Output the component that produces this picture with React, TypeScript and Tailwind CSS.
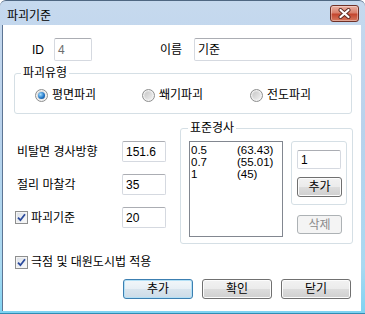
import type { ReactNode } from 'react';

type FieldProps = {
  value: string;
  className?: string;
  muted?: boolean;
};

const Field = ({ value, className = '', muted = false }: FieldProps) => (
  <div
    className={`flex items-center rounded-[2px] border border-[#d5d9e0] border-t-[#abadb3] bg-white pl-[3px] ${
      muted ? 'text-[#6d6d6d]' : 'text-black'
    } ${className}`}
  >
    {value}
  </div>
);

type BtnProps = {
  children: ReactNode;
  variant?: 'normal' | 'default' | 'disabled';
  className?: string;
};

const Btn = ({ children, variant = 'normal', className = '' }: BtnProps) => {
  const look =
    variant === 'default'
      ? 'border-[#3c7fb1] bg-[linear-gradient(#f2f7fa_0%,#e7eff5_50%,#d9e5ee_50%,#cddbe7_100%)] shadow-[inset_0_0_0_1px_#b3e0f6] text-black'
      : variant === 'disabled'
        ? 'border-[#adb2b5] bg-[#f4f4f4] text-[#8b8b8b]'
        : 'border-[#707070] bg-[linear-gradient(#f2f2f2_0%,#ebebeb_50%,#dddddd_50%,#cfcfcf_100%)] shadow-[inset_0_0_0_1px_#fcfcfc] text-black';
  return (
    <button
      type="button"
      className={`flex items-center justify-center rounded-[3px] border ${look} ${className}`}
    >
      {children}
    </button>
  );
};

const Radio = ({ checked = false }: { checked?: boolean }) => (
  <span className="flex h-[13px] w-[13px] shrink-0 items-center justify-center rounded-full border border-[#8e8f8f] bg-[linear-gradient(135deg,#cfcfcf,#f6f6f6)] shadow-[inset_0_0_0_1px_#f2f2f2]">
    {checked ? (
      <span className="h-[7px] w-[7px] rounded-full bg-[radial-gradient(circle_at_35%_35%,#a6e0ff,#2378c9_55%,#0d3f79)]" />
    ) : (
      <span className="h-[7px] w-[7px] rounded-full bg-[linear-gradient(135deg,#c9c9c9,#ececec)]" />
    )}
  </span>
);

const Check = () => (
  <span className="flex h-[13px] w-[13px] shrink-0 items-center justify-center border border-[#8e8f8f] bg-[linear-gradient(135deg,#dadfe6,#fbfbfb)] shadow-[inset_0_0_0_1px_#f4f4f4]">
    <svg width="9" height="9" viewBox="0 0 9 9">
      <path d="M1 4.6 L3.4 7.2 L8 1.2" stroke="#2b4a9c" strokeWidth="1.8" fill="none" />
    </svg>
  </span>
);

const slopes = [
  ['0.5', '(63.43)'],
  ['0.7', '(55.01)'],
  ['1', '(45)'],
];

export default function App() {
  return (
    <div className="flex h-[314px] w-[365px] flex-col rounded-t-[6px] border-t border-b border-[#4f6782] border-b-[#2f8db4] bg-[linear-gradient(#c6d9ee,#b9d2ec_40%,#a9d9f1_85%,#7fd3f2)] pr-[4px] pb-[2px] pl-[2px] font-['Liberation_Sans','Noto_Sans_CJK_KR',sans-serif] text-[12px] leading-[14px] text-black">
      {/* title bar */}
      <div className="flex h-[24px] items-start">
        <span className="mt-[8px] ml-[5px]">파괴기준</span>
        <div className="mt-[4px] mr-[2px] ml-auto flex h-[17px] w-[29px] items-center justify-center rounded-[3px] border border-[#6f3128] bg-[linear-gradient(#eab1a4,#d9806c_45%,#c4462f_55%,#d6795f)] shadow-[inset_0_0_0_1px_rgba(255,255,255,0.35)]">
          <svg width="13" height="11" viewBox="0 0 13 11">
            <path d="M2.5 2 L10.5 9 M10.5 2 L2.5 9" stroke="#5b2a22" strokeWidth="4" strokeLinecap="round" />
            <path d="M2.5 2 L10.5 9 M10.5 2 L2.5 9" stroke="#ffffff" strokeWidth="2.2" strokeLinecap="round" />
          </svg>
        </div>
      </div>

      {/* client area */}
      <div className="flex flex-1 flex-col border-l border-[#5d7594] bg-white">
        <div className="mt-[13px] flex items-center">
          <span className="ml-[29px] w-[22px]">ID</span>
          <Field value="4" muted className="h-[23px] w-[38px]" />
          <span className="ml-[68px] w-[34px]">이름</span>
          <Field value="기준" className="h-[23px] w-[158px]" />
        </div>

        <fieldset className="mt-[5px] ml-[11px] h-[48px] w-[338px] rounded-[3px] border border-[#d5dfe5]">
          <legend className="ml-[6px] px-[2px]">파괴유형</legend>
          <div className="mt-[8px] flex pl-[20px]">
            <label className="flex w-[107px] items-center gap-[4px]">
              <Radio checked />
              평면파괴
            </label>
            <label className="flex w-[108px] items-center gap-[4px]">
              <Radio />
              쐐기파괴
            </label>
            <label className="flex items-center gap-[4px]">
              <Radio />
              전도파괴
            </label>
          </div>
        </fieldset>

        <div className="mt-[7px] flex items-start">
          <div className="flex flex-col gap-[12px] pt-[20px] pl-[12px]">
            <div className="flex h-[21px] items-center">
              <span className="w-[107px] pl-[2px]">비탈면 경사방향</span>
              <Field value="151.6" className="h-[21px] w-[44px]" />
            </div>
            <div className="flex h-[21px] items-center">
              <span className="w-[107px] pl-[2px]">절리 마찰각</span>
              <Field value="35" className="h-[21px] w-[44px]" />
            </div>
            <div className="flex h-[21px] items-center">
              <label className="flex w-[107px] items-center gap-[3px]">
                <Check />
                파괴기준
              </label>
              <Field value="20" className="h-[21px] w-[44px]" />
            </div>
          </div>

          <fieldset className="ml-[14px] h-[123px] w-[173px] rounded-[3px] border border-[#d5dfe5]">
            <legend className="ml-[7px] px-[2px]">표준경사</legend>
            <div className="mt-[6px] flex items-start pl-[8px]">
              <div className="h-[96px] w-[94px] border border-[#828790] pt-[2px] pl-[1px] text-[11.5px] leading-[12px]">
                {slopes.map(([ratio, angle]) => (
                  <div key={ratio} className="flex h-[12px]">
                    <span className="w-[46px]">{ratio}</span>
                    <span>{angle}</span>
                  </div>
                ))}
              </div>
              <div className="ml-[8px] flex flex-col">
                <div className="flex h-[64px] w-[56px] flex-col rounded-[3px] border border-[#d5dfe5] pt-[8px] pl-[5px]">
                  <Field value="1" className="h-[19px] w-[44px]" />
                  <Btn className="mt-[8px] h-[20px] w-[45px]">추가</Btn>
                </div>
                <Btn variant="disabled" className="mt-[10px] ml-[6px] h-[19px] w-[45px]">
                  삭제
                </Btn>
              </div>
            </div>
          </fieldset>
        </div>

        <label className="mt-[11px] flex items-center gap-[3px] pl-[12px]">
          <Check />
          극점 및 대원도시법 적용
        </label>

        <div className="mt-[10px] flex justify-end gap-[9px] pr-[10px]">
          <Btn variant="default" className="h-[20px] w-[70px]">
            추가
          </Btn>
          <Btn className="h-[20px] w-[70px]">확인</Btn>
          <Btn className="h-[20px] w-[70px]">닫기</Btn>
        </div>
      </div>
    </div>
  );
}
